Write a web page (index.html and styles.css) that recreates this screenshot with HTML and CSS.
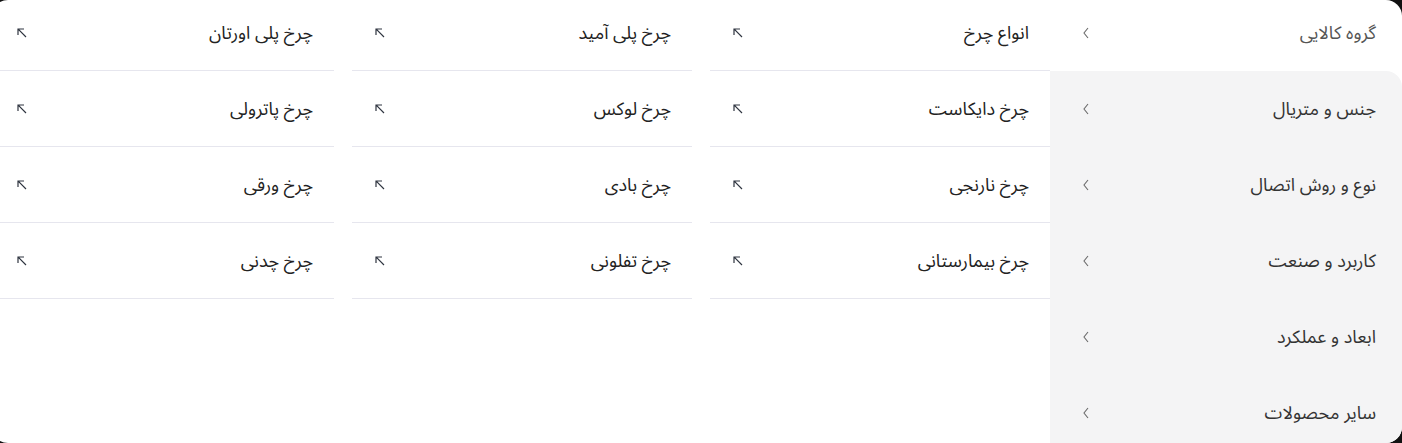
FILE: index.html
```html
<!DOCTYPE html>
<html lang="fa" dir="rtl">
<head>
<meta charset="utf-8">
<link rel="stylesheet" href="styles.css">
</head>
<body>
<div class="panel">
  <nav class="side">
    <div class="side-item active"><span>گروه کالایی</span><svg class="chev" viewBox="0 0 6 12"><polyline points="5,1 1,6 5,11"/></svg></div>
    <div class="side-rest">
      <div class="side-item"><span>جنس و متریال</span><svg class="chev" viewBox="0 0 6 12"><polyline points="5,1 1,6 5,11"/></svg></div>
      <div class="side-item"><span>نوع و روش اتصال</span><svg class="chev" viewBox="0 0 6 12"><polyline points="5,1 1,6 5,11"/></svg></div>
      <div class="side-item"><span>کاربرد و صنعت</span><svg class="chev" viewBox="0 0 6 12"><polyline points="5,1 1,6 5,11"/></svg></div>
      <div class="side-item"><span>ابعاد و عملکرد</span><svg class="chev" viewBox="0 0 6 12"><polyline points="5,1 1,6 5,11"/></svg></div>
      <div class="side-item"><span>سایر محصولات</span><svg class="chev" viewBox="0 0 6 12"><polyline points="5,1 1,6 5,11"/></svg></div>
    </div>
  </nav>
  <div class="grid">
    <a class="cell"><span>انواع چرخ</span><svg class="arr" viewBox="0 0 10 10"><path d="M9 9L1.2 1.2M1 7V1h6"/></svg></a>
    <a class="cell"><span>چرخ پلی آمید</span><svg class="arr" viewBox="0 0 10 10"><path d="M9 9L1.2 1.2M1 7V1h6"/></svg></a>
    <a class="cell"><span>چرخ پلی اورتان</span><svg class="arr" viewBox="0 0 10 10"><path d="M9 9L1.2 1.2M1 7V1h6"/></svg></a>
    <a class="cell"><span>چرخ دایکاست</span><svg class="arr" viewBox="0 0 10 10"><path d="M9 9L1.2 1.2M1 7V1h6"/></svg></a>
    <a class="cell"><span>چرخ لوکس</span><svg class="arr" viewBox="0 0 10 10"><path d="M9 9L1.2 1.2M1 7V1h6"/></svg></a>
    <a class="cell"><span>چرخ پاترولی</span><svg class="arr" viewBox="0 0 10 10"><path d="M9 9L1.2 1.2M1 7V1h6"/></svg></a>
    <a class="cell"><span>چرخ نارنجی</span><svg class="arr" viewBox="0 0 10 10"><path d="M9 9L1.2 1.2M1 7V1h6"/></svg></a>
    <a class="cell"><span>چرخ بادی</span><svg class="arr" viewBox="0 0 10 10"><path d="M9 9L1.2 1.2M1 7V1h6"/></svg></a>
    <a class="cell"><span>چرخ ورقی</span><svg class="arr" viewBox="0 0 10 10"><path d="M9 9L1.2 1.2M1 7V1h6"/></svg></a>
    <a class="cell"><span>چرخ بیمارستانی</span><svg class="arr" viewBox="0 0 10 10"><path d="M9 9L1.2 1.2M1 7V1h6"/></svg></a>
    <a class="cell"><span>چرخ تفلونی</span><svg class="arr" viewBox="0 0 10 10"><path d="M9 9L1.2 1.2M1 7V1h6"/></svg></a>
    <a class="cell"><span>چرخ چدنی</span><svg class="arr" viewBox="0 0 10 10"><path d="M9 9L1.2 1.2M1 7V1h6"/></svg></a>
  </div>
</div>
</body>
</html>
```
FILE: styles.css
```css
html, body {
  margin: 0;
  height: 100%;
  background: #111;
  overflow: hidden;
}
body {
  font-family: "Noto Sans Arabic", "Vazirmatn", "DejaVu Sans", sans-serif;
  font-size: 18px;
  color: #222;
}
.panel {
  display: flex;
  direction: rtl;
  height: 443px;
  margin-left: -8px;
  background: #fff;
  border-radius: 16px;
  overflow: hidden;
}
.side {
  width: 352px;
  flex: none;
  display: flex;
  flex-direction: column;
}
.side-rest {
  flex: 1 0 auto;
  background: #f4f4f5;
  border-top-right-radius: 16px;
}
.side-item {
  flex: none;
  height: 76px;
  display: flex;
  align-items: center;
  justify-content: space-between;
  padding: 0 26px 0 33px;
  box-sizing: border-box;
  color: #333;
  white-space: nowrap;
}
.side-item.active {
  height: 71px;
  padding-bottom: 5px;
  color: #555;
}
.chev {
  width: 6px;
  height: 12px;
  fill: none;
  stroke: #6b6b6b;
  stroke-width: 1.1;
}
.grid {
  flex: none;
  width: 1058px;
  display: grid;
  grid-template-columns: repeat(3, 340px);
  column-gap: 18px;
  grid-template-rows: 71px;
  grid-auto-rows: 76px;
  align-content: start;
}
.cell {
  display: flex;
  align-items: center;
  justify-content: space-between;
  padding: 0 21px 0 23px;
  border-bottom: 1px solid #e6e6ee;
  color: #222;
  white-space: nowrap;
}
.cell:nth-child(-n+3) {
  padding-bottom: 5px;
}
.arr {
  width: 10px;
  height: 10px;
  fill: none;
  stroke: #2f3540;
  stroke-width: 1.2;
}
```
